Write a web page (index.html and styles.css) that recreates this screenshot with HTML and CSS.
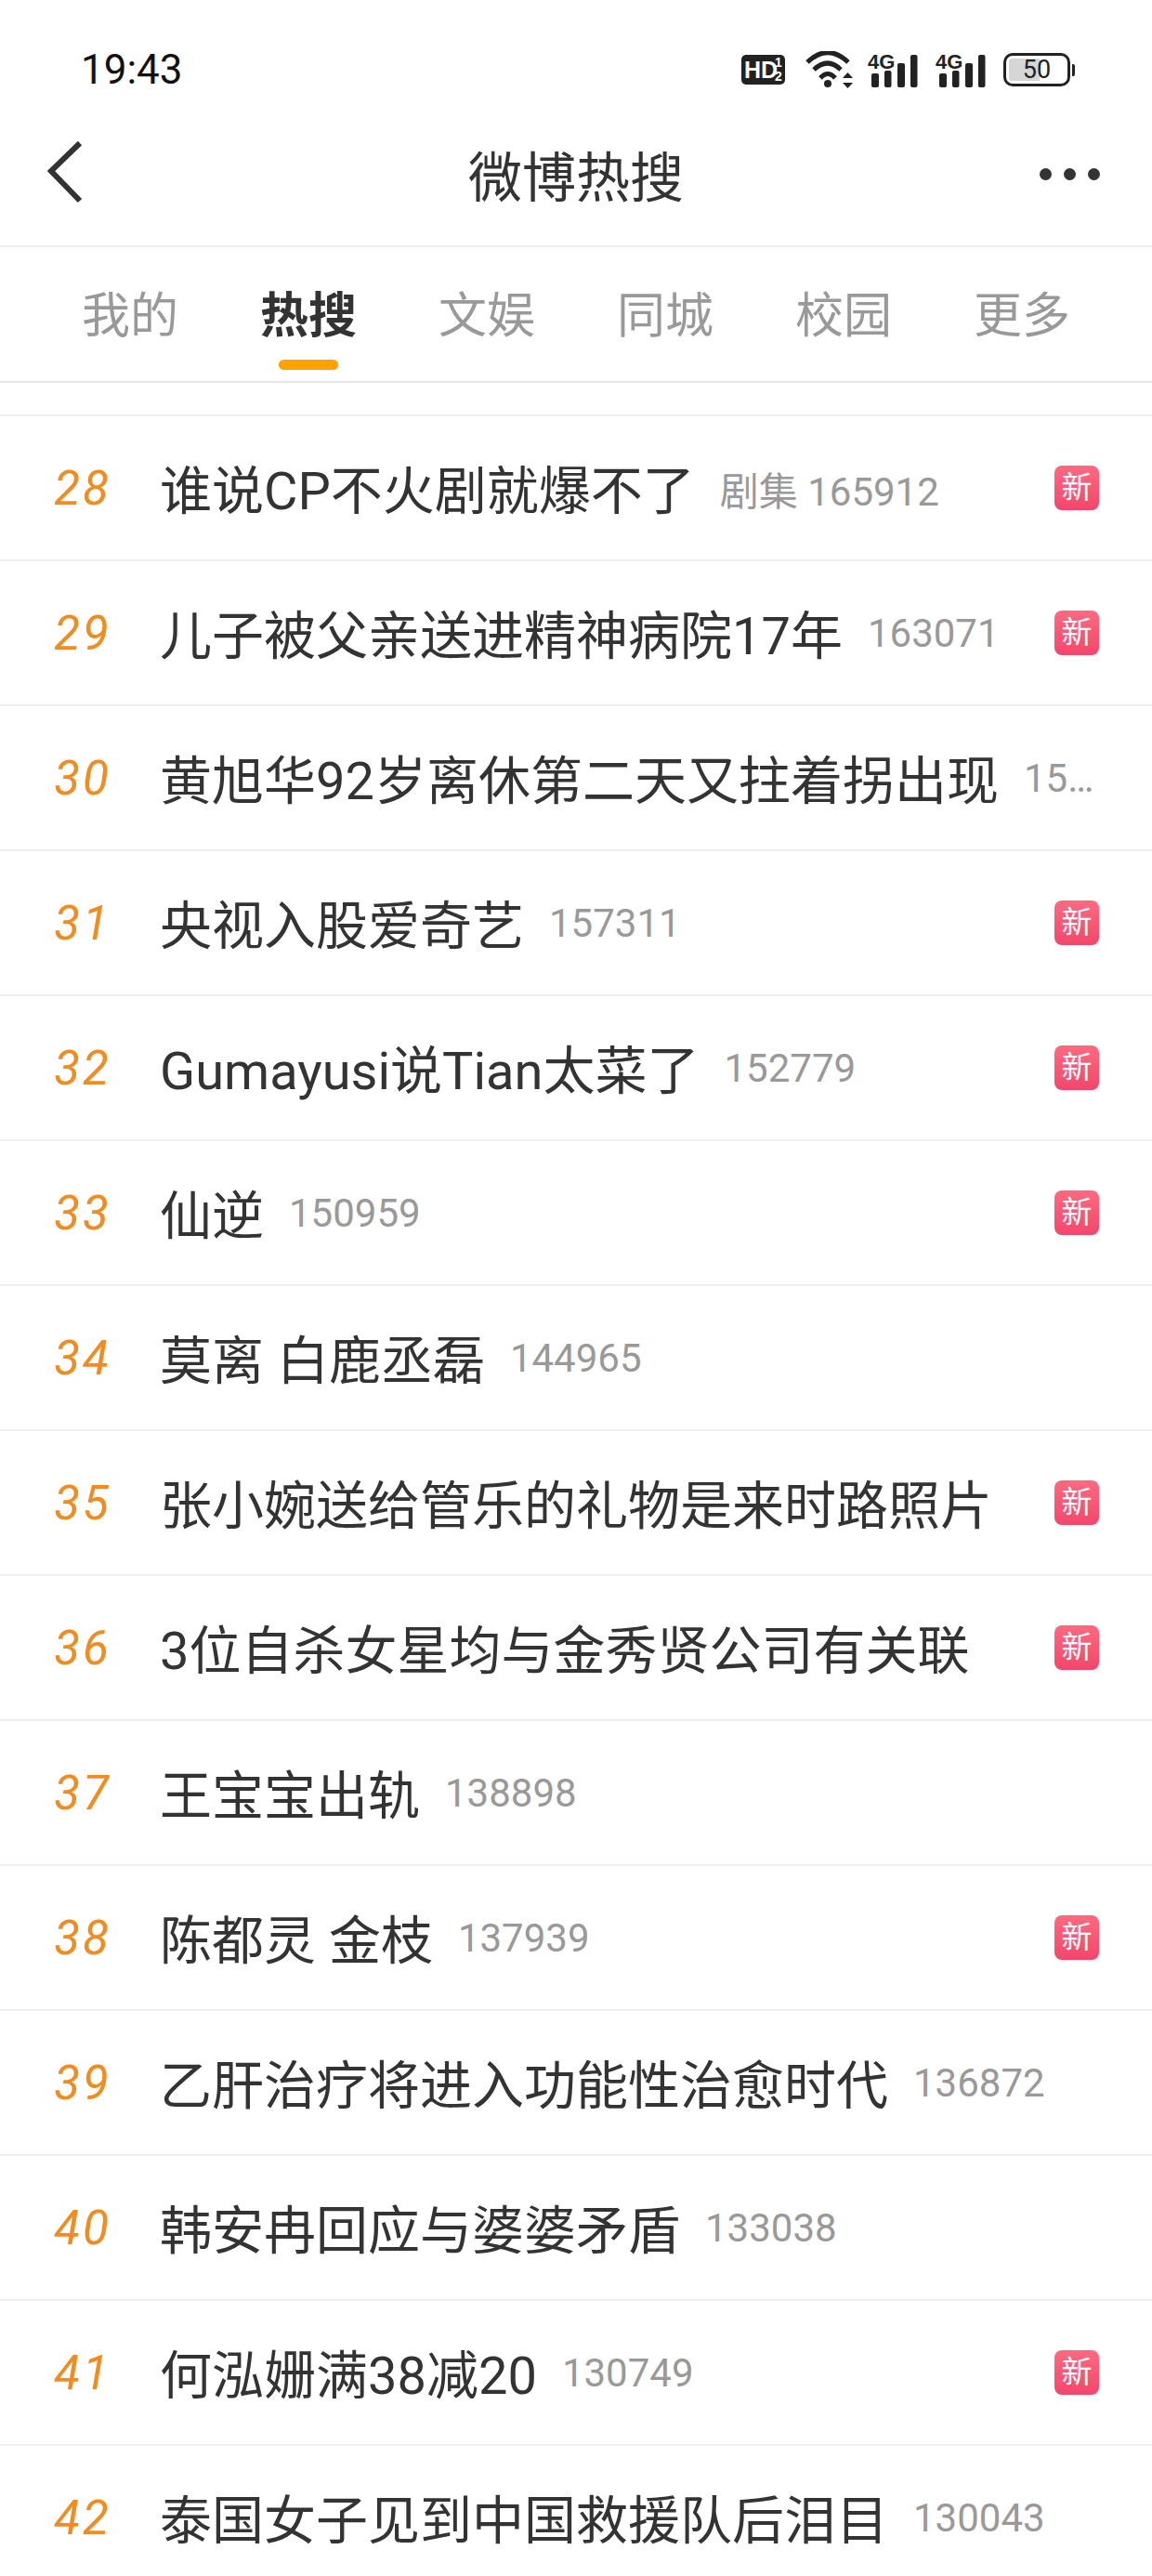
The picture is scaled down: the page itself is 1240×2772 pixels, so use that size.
FILE: index.html
```html
<!DOCTYPE html>
<html lang="en">
<head>
    <meta charset="UTF-8">
    <title>微博热搜</title>
    <link rel="stylesheet" href="styles.css">
</head>
<body>
    <div class="status-bar">
        <span class="time">19:43</span>
        <div class="status-icons">
            <svg class="icon-hd" width="47" height="32" viewBox="0 0 47 32">
                <rect width="47" height="32" rx="5" fill="#222"/>
                <text x="3" y="25" class="hd-text">HD</text>
                <text x="36" y="13" class="hd-small">1</text>
                <text x="36" y="28" class="hd-small">2</text>
            </svg>
            <svg class="icon-wifi" width="51" height="40" viewBox="868 53 51 40">
                <path d="M870 65Q892 44 914 65M877 73Q892 59 906 73M884 82Q892 73 900 82" fill="none" stroke="#222" stroke-width="5"/>
                <circle cx="892" cy="88" r="4" fill="#222"/>
                <path d="M908 82L913.5 76L919 82ZM908 87L919 87L913.5 93Z" fill="#222"/>
            </svg>
            <svg class="icon-signal" width="54" height="40" viewBox="936 53 54 40">
                <text x="936" y="72" class="signal-text">4G</text>
                <rect x="940" y="77" width="8" height="15" rx="2" fill="#222"/>
                <rect x="954" y="74" width="7.5" height="18" rx="2" fill="#222"/>
                <rect x="968" y="66" width="8" height="26" rx="2" fill="#222"/>
                <rect x="982" y="57" width="7.5" height="35" rx="2" fill="#222"/>
            </svg>
            <svg class="icon-signal" width="54" height="40" viewBox="936 53 54 40">
                <text x="936" y="72" class="signal-text">4G</text>
                <rect x="940" y="77" width="8" height="15" rx="2" fill="#222"/>
                <rect x="954" y="74" width="7.5" height="18" rx="2" fill="#222"/>
                <rect x="968" y="66" width="8" height="26" rx="2" fill="#222"/>
                <rect x="982" y="57" width="7.5" height="35" rx="2" fill="#222"/>
            </svg>
            <div class="battery">
                <div class="battery-body">
                    <div class="battery-fill"></div>
                    <span class="battery-num">50</span>
                </div>
                <div class="battery-nub"></div>
            </div>
        </div>
    </div>

    <div class="nav">
        <svg class="back" width="42" height="68" viewBox="0 0 42 68">
            <path d="M37 3L6 33L37 65" fill="none" stroke="#333" stroke-width="6"/>
        </svg>
        <h1 class="nav-title">微博热搜</h1>
        <div class="dots"><i></i><i></i><i></i></div>
    </div>

    <div class="tabs">
        <div class="tab">我的</div>
        <div class="tab active">热搜</div>
        <div class="tab">文娱</div>
        <div class="tab">同城</div>
        <div class="tab">校园</div>
        <div class="tab">更多</div>
    </div>

    <div class="list">
        <div class="row">
            <span class="rank">28</span>
            <span class="name">谁说CP不火剧就爆不了</span>
            <span class="count">剧集 165912</span>
            <span class="badge">新</span>
        </div>
        <div class="row">
            <span class="rank">29</span>
            <span class="name">儿子被父亲送进精神病院17年</span>
            <span class="count">163071</span>
            <span class="badge">新</span>
        </div>
        <div class="row">
            <span class="rank">30</span>
            <span class="name">黄旭华92岁离休第二天又拄着拐出现</span>
            <span class="count">158238</span>
        </div>
        <div class="row">
            <span class="rank">31</span>
            <span class="name">央视入股爱奇艺</span>
            <span class="count">157311</span>
            <span class="badge">新</span>
        </div>
        <div class="row">
            <span class="rank">32</span>
            <span class="name">Gumayusi说Tian太菜了</span>
            <span class="count">152779</span>
            <span class="badge">新</span>
        </div>
        <div class="row">
            <span class="rank">33</span>
            <span class="name">仙逆</span>
            <span class="count">150959</span>
            <span class="badge">新</span>
        </div>
        <div class="row">
            <span class="rank">34</span>
            <span class="name">莫离 白鹿丞磊</span>
            <span class="count">144965</span>
        </div>
        <div class="row">
            <span class="rank">35</span>
            <span class="name">张小婉送给管乐的礼物是来时路照片</span>
            <span class="badge">新</span>
        </div>
        <div class="row">
            <span class="rank">36</span>
            <span class="name">3位自杀女星均与金秀贤公司有关联</span>
            <span class="badge">新</span>
        </div>
        <div class="row">
            <span class="rank">37</span>
            <span class="name">王宝宝出轨</span>
            <span class="count">138898</span>
        </div>
        <div class="row">
            <span class="rank">38</span>
            <span class="name">陈都灵 金枝</span>
            <span class="count">137939</span>
            <span class="badge">新</span>
        </div>
        <div class="row">
            <span class="rank">39</span>
            <span class="name">乙肝治疗将进入功能性治愈时代</span>
            <span class="count">136872</span>
        </div>
        <div class="row">
            <span class="rank">40</span>
            <span class="name">韩安冉回应与婆婆矛盾</span>
            <span class="count">133038</span>
        </div>
        <div class="row">
            <span class="rank">41</span>
            <span class="name">何泓姗满38减20</span>
            <span class="count">130749</span>
            <span class="badge">新</span>
        </div>
        <div class="row">
            <span class="rank">42</span>
            <span class="name">泰国女子见到中国救援队后泪目</span>
            <span class="count">130043</span>
        </div>
    </div>
</body>
</html>
```

FILE: styles.css
```css
html, body {
    margin: 0;
    padding: 0;
}
body {
    width: 1240px;
    height: 2772px;
    overflow: hidden;
    background: #fff;
    font-family: Roboto, "Noto Sans CJK SC", sans-serif;
}
.status-bar {
    box-sizing: border-box;
    height: 116px;
    padding: 34px 83px 0 87px;
    display: flex;
    align-items: center;
    justify-content: space-between;
}
.time {
    font-size: 44px;
    color: #111;
}
.status-icons {
    display: flex;
    align-items: center;
    gap: 19px;
}
.icon-wifi {
    margin-left: 3px;
    margin-right: -3px;
}
.hd-text {
    font: bold 25px "Liberation Sans", sans-serif;
    fill: #fff;
}
.hd-small {
    font: bold 14px "Liberation Sans", sans-serif;
    fill: #fff;
}
.signal-text {
    font: bold 22px "Liberation Sans", sans-serif;
    fill: #222;
}
.battery {
    display: flex;
    align-items: center;
    gap: 2px;
}
.battery-body {
    box-sizing: border-box;
    position: relative;
    width: 72px;
    height: 36px;
    border: 3px solid #222;
    border-radius: 10px;
    display: flex;
    align-items: center;
    justify-content: center;
    overflow: hidden;
}
.battery-fill {
    position: absolute;
    left: 3px;
    top: 3px;
    bottom: 3px;
    width: 50%;
    background: #d6d6d6;
    border-radius: 3px 0 0 3px;
}
.battery-num {
    position: relative;
    font-size: 27px;
    color: #222;
}
.battery-nub {
    width: 3px;
    height: 13px;
    background: #222;
    border-radius: 0 2px 2px 0;
}
.nav {
    box-sizing: border-box;
    height: 150px;
    padding: 0 56px 0 49px;
    border-bottom: 2px solid #eee;
    display: flex;
    align-items: center;
    justify-content: space-between;
    position: relative;
}
.back {
    margin-top: -10px;
}
.nav-title {
    position: absolute;
    left: 0;
    right: 0;
    margin: 0;
    padding-bottom: 6px;
    text-align: center;
    font-size: 58px;
    font-weight: 400;
    color: #333;
}
.dots {
    display: flex;
    gap: 13px;
    margin-bottom: 6px;
}
.dots i {
    width: 13px;
    height: 13px;
    border-radius: 50%;
    background: #333;
}
.tabs {
    box-sizing: border-box;
    height: 146px;
    padding: 0 44px;
    border-bottom: 2px solid #e8e8e8;
    display: grid;
    grid-template-columns: repeat(6, 1fr);
}
.tab {
    position: relative;
    text-align: center;
    font-size: 52px;
    line-height: 150px;
    height: 144px;
    color: #999;
}
.tab.active {
    color: #333;
    font-weight: 700;
}
.tab.active::after {
    content: "";
    position: absolute;
    left: 64px;
    bottom: 12px;
    width: 64px;
    height: 11px;
    border-radius: 6px;
    background: #ffa200;
}
.list {
    margin-top: 34px;
    border-top: 2px solid #eee;
}
.row {
    box-sizing: border-box;
    height: 156px;
    padding: 0 57px 0 0;
    border-bottom: 2px solid #eee;
    display: flex;
    align-items: center;
}
.rank {
    flex: none;
    width: 172px;
    padding-left: 6px;
    box-sizing: border-box;
    text-align: center;
    font-size: 51px;
    font-style: italic;
    letter-spacing: 3px;
    color: #f08c20;
}
.name {
    flex: none;
    margin-bottom: 4px;
    font-size: 56px;
    color: #333;
    white-space: nowrap;
}
.count {
    flex: 0 1 auto;
    min-width: 0;
    margin-left: 27px;
    font-size: 42px;
    color: #999;
    white-space: nowrap;
    overflow: hidden;
    text-overflow: ellipsis;
}
.badge {
    flex: none;
    margin-left: auto;
    width: 48px;
    height: 48px;
    border-radius: 8px;
    background: linear-gradient(#ff6a80, #f2466c);
    color: #fff;
    font-size: 33px;
    line-height: 48px;
    text-align: center;
}
```
